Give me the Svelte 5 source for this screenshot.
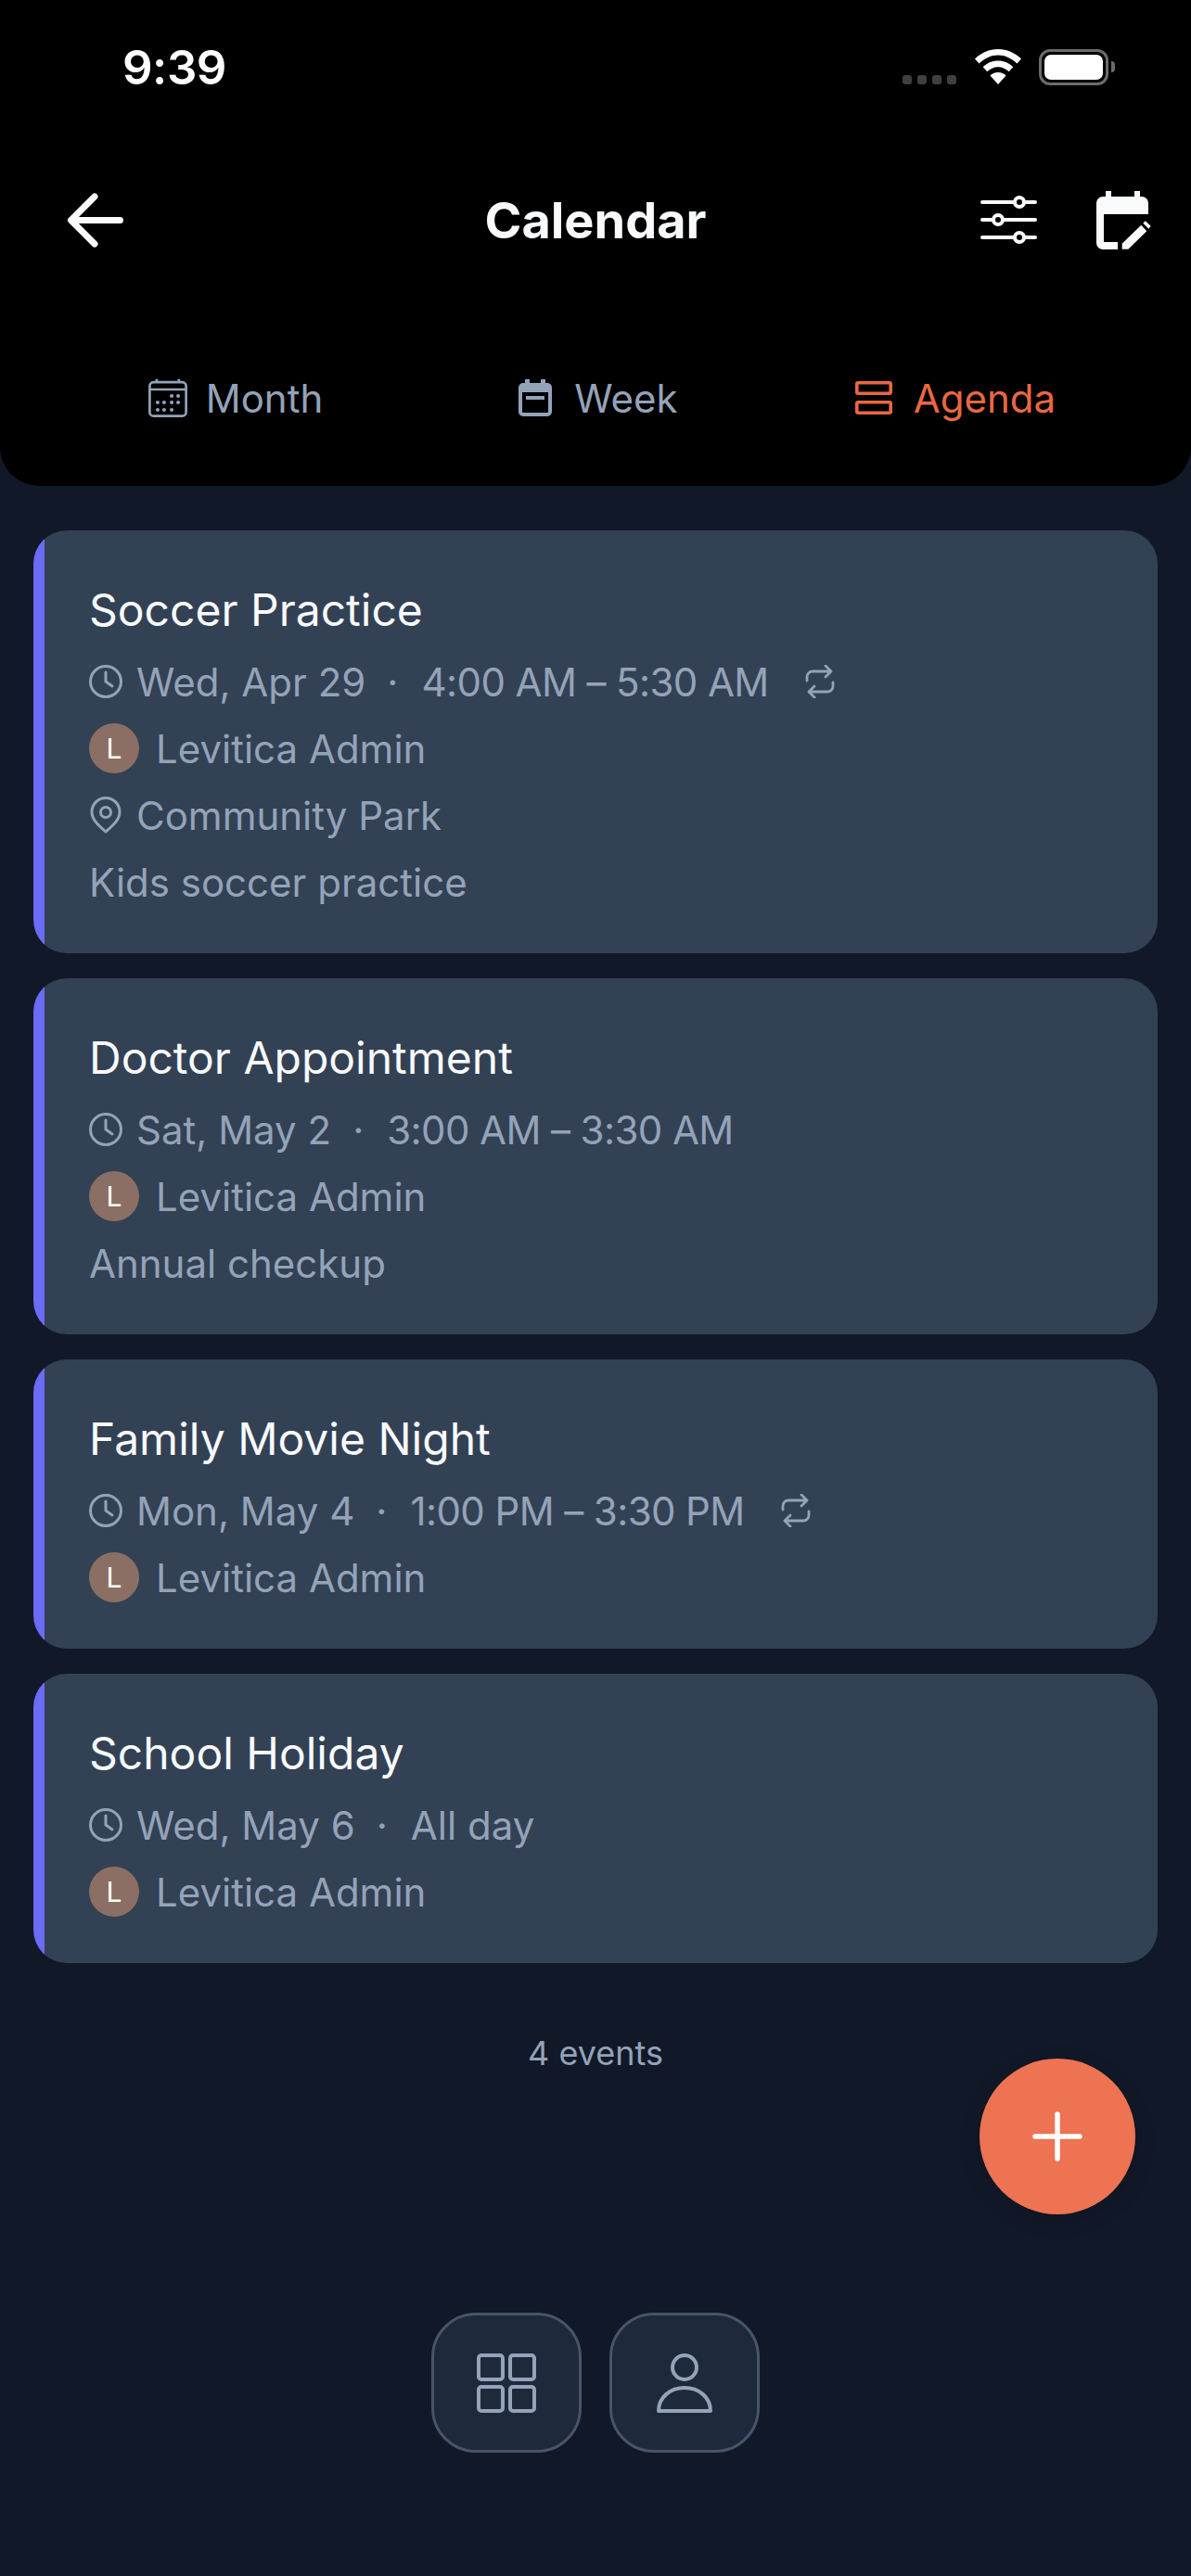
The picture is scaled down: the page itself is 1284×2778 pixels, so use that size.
<script>
  const events = [
    { title: 'Soccer Practice', when: 'Wed, Apr 29', time: '4:00 AM – 5:30 AM', repeat: true, place: 'Community Park', note: 'Kids soccer practice' },
    { title: 'Doctor Appointment', when: 'Sat, May 2', time: '3:00 AM – 3:30 AM', note: 'Annual checkup' },
    { title: 'Family Movie Night', when: 'Mon, May 4', time: '1:00 PM – 3:30 PM', repeat: true },
    { title: 'School Holiday', when: 'Wed, May 6', time: 'All day', allDay: true }
  ];
  const dots = [[17.9,13.6],[22.9,13.6],[7.1,18.6],[12.1,18.6],[17.9,18.6],[22.9,18.6],[7.1,24.3],[12.1,24.3],[17.9,24.3]];
</script>

<div class="page">
  <header class="head">
    <div class="status">
      <span class="clock">9:39</span>
      <div class="status-icons">
        <div class="signal"><i></i><i></i><i></i><i></i></div>
        <svg class="wifi" viewBox="0 0 50 38"><path fill="#fff" d="M25 0C15.500 0 7 3.800 0 10.500l4.500 5C10.500 9.900 17.500 6.500 25 6.500s14.500 3.400 20.500 9l4.500-5C43 3.800 34.500 0 25 0z"/><path fill="#fff" d="M25 12.500c-6.300 0-12 2.500-16.300 6.800l4.600 5c3-3 7.200-5 11.700-5s8.700 2 11.700 5l4.600-5C37 15 31.300 12.500 25 12.500z"/><path fill="#fff" d="M25 25c-3.500 0-6.500 1.300-8.500 3.500L25 38l8.500-9.500C31.500 26.300 28.500 25 25 25z"/></svg>
        <div class="battery"><div class="fill"></div></div>
        <div class="nub"></div>
      </div>
    </div>
    <nav class="bar">
      <svg class="back" viewBox="0 0 61 59" fill="none" stroke="#f8fafc" stroke-width="7" stroke-linecap="round" stroke-linejoin="round"><path d="M5 29.500H57.500M30 4L4.500 29.500L30 55"/></svg>
      <h1>Calendar</h1>
      <div class="actions">
        <svg class="sliders" viewBox="0 0 61 52" fill="none" stroke="#f8fafc" stroke-width="4" stroke-linecap="round"><path d="M2 7H37M47 7H59M2 26H14M24 26H59M2 45H37M47 45H59"/><circle cx="42" cy="7" r="5"/><circle cx="19" cy="26" r="5"/><circle cx="42" cy="45" r="5"/></svg>
        <svg class="cal-edit" viewBox="0 0 59 63"><path fill="#f8fafc" d="M10 0h6v6h25V0h6v6h2a7 7 0 0 1 7 7v12H8v30h15v8H7a7 7 0 0 1-7-7V13a7 7 0 0 1 7-7h3z"/><path fill="#f8fafc" d="M27.700 62.700v-6L48.300 36.700l6 6.600L34.300 62.700z"/><path fill="#f8fafc" d="M50.300 34.700l2.400-2.400 6 5.400-2.400 3z"/></svg>
      </div>
    </nav>
    <div class="tabs">
      <div class="tab">
        <svg class="ti month" viewBox="0 0 30 30" fill="none" stroke="#94a3b8" stroke-width="1.900"><rect x="1" y="3" width="28" height="26" rx="3"/><path d="M1 8.600H29M6.400 0.500v2.500M23.400 0.500v2.500"/>{#each dots as d}<circle cx={d[0]} cy={d[1]} r="1.450" fill="#94a3b8" stroke="none"/>{/each}</svg>
        <span>Month</span>
      </div>
      <div class="tab">
        <svg class="ti week" viewBox="0 0 36 40" fill="none"><path fill="#94a3b8" d="M7 0h5v4h12V0h5v4h2a5 5 0 0 1 5 5v26a5 5 0 0 1-5 5H5a5 5 0 0 1-5-5V9a5 5 0 0 1 5-5h2zM4 14v21a1 1 0 0 0 1 1h26a1 1 0 0 0 1-1V14z"/><rect x="8" y="18" width="20" height="4" fill="#94a3b8"/></svg>
        <span>Week</span>
      </div>
      <div class="tab active">
        <svg class="ti agenda" viewBox="0 0 40 36" fill="none" stroke="#ea6840" stroke-width="3.600"><rect x="1.800" y="1.800" width="36.400" height="11.400" rx="1.500"/><rect x="1.800" y="22.800" width="36.400" height="11.400" rx="1.500"/></svg>
        <span>Agenda</span>
      </div>
    </div>
  </header>

  <main class="list">
    {#each events as e}
      <article class="card">
        <h2>{e.title}</h2>
        <div class="row">
          <svg class="mi" viewBox="0 0 36 36" fill="none" stroke="#94a3b8" stroke-width="3" stroke-linecap="round"><circle cx="18" cy="18" r="16.500"/><path d="M18 8v10l7 5"/></svg>
          <span>{e.when}</span><span class="sep">·</span><span class:tight={!e.allDay}>{e.time}</span>
          {#if e.repeat}
            <svg class="rep" viewBox="0 0 32 36" fill="none" stroke="#94a3b8" stroke-width="2.800" stroke-linecap="round" stroke-linejoin="round"><path d="M22 1l6 6-6 6M2 17v-4a6 6 0 0 1 6-6h20M10 35l-6-6 6-6M30 19v4a6 6 0 0 1-6 6H4"/></svg>
          {/if}
        </div>
        <div class="row who">
          <span class="avatar">L</span><span>Levitica Admin</span>
        </div>
        {#if e.place}
          <div class="row">
            <svg class="mi pin" viewBox="0 0 36 40" fill="none" stroke="#94a3b8" stroke-width="3" stroke-linejoin="round"><path d="M18 38C10 31 3 25 3 16.500a15 15 0 0 1 30 0C33 25 26 31 18 38z"/><circle cx="18" cy="17" r="5.500"/></svg>
            <span>{e.place}</span>
          </div>
        {/if}
        {#if e.note}
          <div class="row"><span>{e.note}</span></div>
        {/if}
      </article>
    {/each}
    <p class="count">4 events</p>
  </main>

  <button class="fab" aria-label="Add">
    <svg viewBox="0 0 54 54" fill="none" stroke="#fff" stroke-width="5.500" stroke-linecap="round"><path d="M27 3V51M3 27H51"/></svg>
  </button>

  <div class="dock">
    <button class="dock-btn" aria-label="Home">
      <svg viewBox="0 0 64 64" fill="none" stroke="#94a3b8" stroke-width="4"><rect x="2" y="2" width="26" height="26" rx="3"/><rect x="36" y="2" width="26" height="26" rx="3"/><rect x="2" y="36" width="26" height="26" rx="3"/><rect x="36" y="36" width="26" height="26" rx="3"/></svg>
    </button>
    <button class="dock-btn" aria-label="Profile">
      <svg viewBox="0 0 64 64" fill="none" stroke="#94a3b8" stroke-width="4" stroke-linejoin="round"><circle cx="32" cy="15" r="13"/><path d="M4 62c0-15 13-25 28-25s28 10 28 25z"/></svg>
    </button>
  </div>
</div>

<style>
  :global(body) { margin: 0; background: #111827; }
  .page {
    position: relative;
    width: 1284px;
    height: 2778px;
    overflow: hidden;
    background: #111827;
    font-family: Inter, "Noto Sans", sans-serif;
    color: #94a3b8;
  }
  .head {
    height: 524px;
    box-sizing: border-box;
    background: #000;
    border-radius: 0 0 42px 42px;
    display: flex;
    flex-direction: column;
  }
  .status {
    height: 144px;
    box-sizing: border-box;
    display: flex;
    align-items: center;
    justify-content: space-between;
    padding: 0 82px 0 132px;
  }
  .clock { font-size: 51px; font-weight: 600; color: #fff; letter-spacing: -0.5px; }
  .status-icons { display: flex; align-items: center; }
  .signal { display: flex; gap: 6px; margin: 28px 20px 0 0; }
  .signal i { width: 10px; height: 10px; border-radius: 3px; background: #3f3f3f; }
  .wifi { width: 50px; height: 38px; margin-right: 19px; }
  .battery { width: 75px; height: 39px; box-sizing: border-box; border: 3px solid #6b6b6b; border-radius: 12px; padding: 3px; }
  .fill { height: 100%; background: #fff; border-radius: 7px; }
  .nub { width: 4px; height: 12px; margin-left: 3px; background: #6b6b6b; border-radius: 0 4px 4px 0; }
  .bar {
    height: 96px;
    margin-top: 45px;
    display: grid;
    grid-template-columns: 1fr auto 1fr;
    align-items: center;
    padding: 0 43px;
  }
  .back { width: 61px; height: 59px; margin-left: 29px; }
  h1 { margin: 0; text-align: center; font-size: 54px; font-weight: 700; color: #f8fafc; }
  .actions { display: flex; align-items: center; justify-content: flex-end; gap: 64px; }
  .sliders { width: 61px; height: 52px; }
  .cal-edit { width: 59px; height: 63px; }
  .tabs {
    display: flex;
    margin-top: 99px;
    padding: 0 60px;
    height: 90px;
    align-items: center;
    justify-content: space-between;
  }
  .tab { flex: 1; display: flex; align-items: center; justify-content: center; gap: 20px; font-size: 42px; color: #94a3b8; }
  .tab.active { color: #ea6840; gap: 23px; }
  .ti { flex: none; }
  .ti.month { width: 42px; height: 42px; }
  .ti.week { width: 36px; height: 40px; margin: 0 4px 0 6px; }
  .ti.agenda { width: 40px; height: 36px; }
  .list {
    padding: 48px 36px 0;
    display: flex;
    flex-direction: column;
    gap: 27px;
  }
  .card {
    background: linear-gradient(90deg, #6b6bf5 12px, #334155 12px);
    border-radius: 36px;
    padding: 50px 48px 41px 60px;
    display: flex;
    flex-direction: column;
  }
  h2 { margin: 0 0 5px; font-size: 48px; line-height: 72px; font-weight: 400; color: #f8fafc; }
  .row { display: flex; align-items: center; height: 72px; font-size: 42px; color: #94a3b8; }
  .mi { width: 36px; height: 36px; margin-right: 15px; flex: none; }
  .mi.pin { height: 40px; }
  .sep { margin: 0 25px 0 23px; }
  .tight { letter-spacing: -0.6px; }
  .rep { width: 32px; height: 36px; margin-left: 39px; }
  .avatar {
    width: 54px; height: 54px; border-radius: 50%;
    background: #8b6f64; color: #fff;
    display: flex; align-items: center; justify-content: center;
    font-size: 30px; margin-right: 18px; flex: none;
  }
  .count { margin: 43px 0 0; text-align: center; font-size: 36px; line-height: 54px; color: #94a3b8; }
  .fab {
    position: absolute;
    left: 1056px; top: 2220px;
    width: 168px; height: 168px;
    border: 0; border-radius: 50%;
    background: #ed7352;
    box-shadow: 0 6px 24px rgba(0, 0, 0, 0.12);
    display: flex; align-items: center; justify-content: center;
    padding: 0;
  }
  .fab svg { width: 54px; height: 54px; }
  .dock {
    position: absolute;
    left: 0; right: 0; top: 2494px;
    display: flex; justify-content: center; gap: 30px;
  }
  .dock-btn {
    width: 162px; height: 151px;
    box-sizing: border-box;
    padding: 0;
    background: #1e293b;
    border: 3px solid #475569;
    border-radius: 48px;
    display: flex; align-items: center; justify-content: center;
  }
  .dock-btn svg { width: 64px; height: 64px; }
</style>
